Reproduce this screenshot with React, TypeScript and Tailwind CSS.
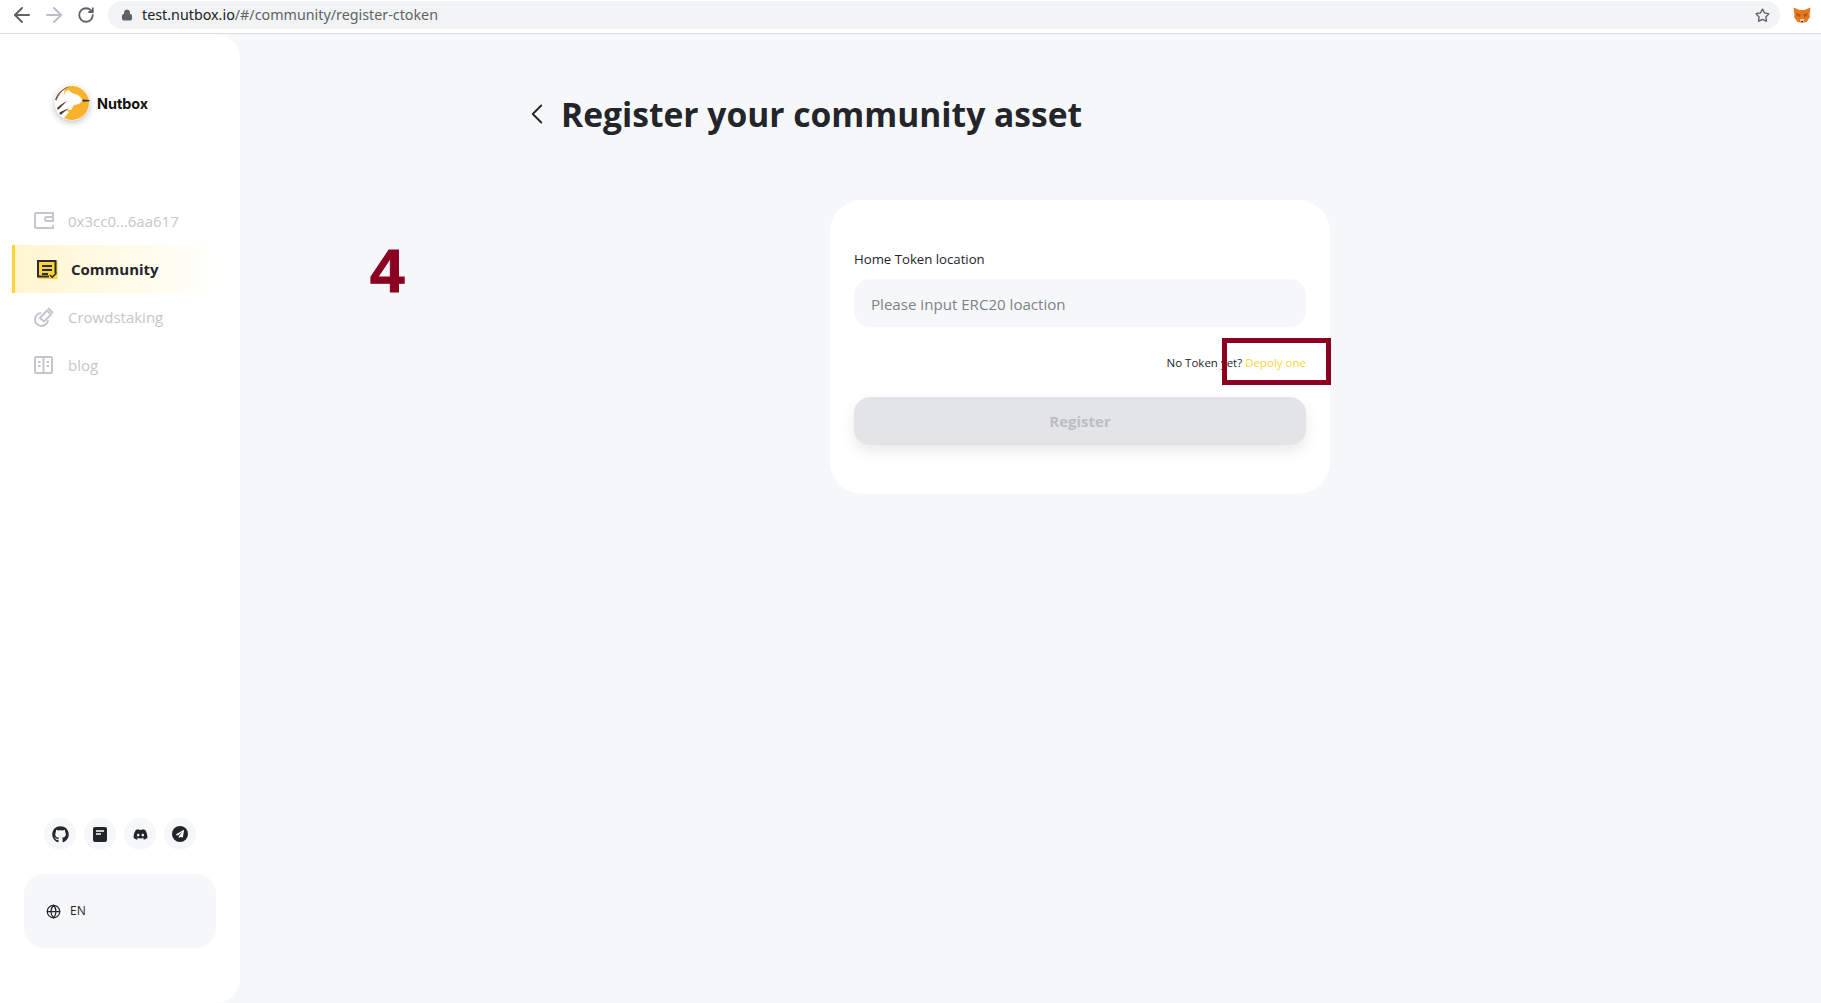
import React from 'react';
import { ArrowLeft, ArrowRight, RotateCw, Lock, Star, ChevronLeft, Globe } from 'lucide-react';
import { FaGithub, FaDiscord, FaPaperPlane } from 'react-icons/fa';

function Logo() {
    return (
        <svg width="36" height="36" viewBox="0 0 36 36" className="drop-shadow-[0_2px_3px_rgba(0,0,0,0.25)]">
            <circle cx="18" cy="18" r="17.5" fill="#ffffff" />
            <path d="M11 2.5 A17 17 0 0 1 35 18 A17 17 0 0 1 10 33 L15 27 L8 22 Z" fill="#f8b22c" />
            <path d="M12 6 L15 5 L18 8 L24 10 L29 15 L25 19 L20 20 L17 25 L9 25 L6 18 Z" fill="#ffffff" />
            <path d="M1 15 C3 8 9 2.5 17 1 C10 3.5 5 8.5 2.5 15.5 Z" fill="#7d5c45" />
            <path d="M3 23 C6 20 9 18 13 16 C10 19 7 22 4 25 Z" fill="#5a3a28" />
            <path d="M5 28 C8 26 11 24.5 15 23.5 C12 25.5 9 27.5 7 30 Z" fill="#5a3a28" />
            <path d="M28 14.5 L35.5 15 L35.5 16.2 L29 16.8 Z" fill="#4a2c1a" />
        </svg>
    );
}

function Fox() {
    return (
        <svg width="18" height="16" viewBox="0 0 18 16">
            <path d="M0.5 0.5 L6.5 3 L11.5 3 L17.5 0.5 L16.5 8 L17 10 L13.5 15 L10.5 15.5 L7.5 15.5 L4.5 15 L1 10 L1.5 8 Z" fill="#e8781e" />
            <path d="M3 6 L7.5 7 L7 10 L4 9 Z M15 6 L10.5 7 L11 10 L14 9 Z" fill="#b9591a" />
            <path d="M7 12 L11 12 L10.5 15.5 L7.5 15.5 Z" fill="#e6d6c8" />
            <path d="M8 14 L10 14 L9.5 15.5 L8.5 15.5 Z" fill="#2a2320" />
        </svg>
    );
}

function WalletIcon() {
    return (
        <svg width="20" height="18" viewBox="0 0 20 18" fill="none" stroke="#c4c6cb" strokeWidth="2">
            <path d="M19 5 V1 H2 A1 1 0 0 0 1 2 V15 A1 1 0 0 0 2 16 H19 V13" />
            <path d="M19 5 H13 A1.5 1.5 0 0 0 13 9 H19 V5" fill="#ffffff" />
        </svg>
    );
}

function CommunityIcon() {
    return (
        <svg width="21" height="19" viewBox="0 0 21 19">
            <rect x="1.5" y="1" width="19" height="18" fill="#fcd535" />
            <path d="M18.5 13 V1 H1 V16.5 H12" fill="none" stroke="#2b2c33" strokeWidth="2" />
            <path d="M5 6 H15 M5 10 H15 M5 14 H11" stroke="#2b2c33" strokeWidth="1.8" />
            <path d="M13 15 L15.2 17.2 L19.5 13" fill="none" stroke="#2b2c33" strokeWidth="1.6" />
        </svg>
    );
}

function StakingIcon() {
    return (
        <svg width="20" height="20" viewBox="0 0 20 20" fill="none" stroke="#c4c6cb" strokeWidth="2">
            <path d="M7 6 A6.5 6.5 0 1 0 14 13" />
            <path d="M6 11 L13 3.5 L17 7.5 L10 14.5 Z" />
            <path d="M14 1 L19 6" />
        </svg>
    );
}

function BlogIcon() {
    return (
        <svg width="19" height="18" viewBox="0 0 19 18" fill="none" stroke="#c4c6cb" strokeWidth="2">
            <rect x="1" y="1" width="17" height="16" rx="1" />
            <path d="M9.5 1 V17" />
            <path d="M4 6 H6.5 M4 10 H6.5 M12.5 6 H15 M12.5 10 H15" />
        </svg>
    );
}

function DocIcon() {
    return (
        <svg width="14" height="15" viewBox="0 0 14 15">
            <rect width="14" height="15" rx="2" fill="#24252b" />
            <path d="M3 4 H11 M3 7 H8" stroke="#ffffff" strokeWidth="1.4" />
        </svg>
    );
}

const navItems = [
    { icon: WalletIcon, title: '0x3cc0...6aa617' },
    { icon: CommunityIcon, title: 'Community', active: true },
    { icon: StakingIcon, title: 'Crowdstaking' },
    { icon: BlogIcon, title: 'blog' },
];

export default function App() {
    return (
        <div className="h-[1003px] flex flex-col overflow-hidden bg-[#f6f7f9] font-['Open_Sans',sans-serif] text-[#24252b]">
            <header className="h-[34px] flex items-center bg-white border-b border-[#dadce0] pb-[3px]">
                <div className="flex items-center gap-[8px] pl-[10px] w-[108px]">
                    <ArrowLeft className="h-[24px] w-[24px] text-[#5f6368]" strokeWidth={2} />
                    <ArrowRight className="h-[24px] w-[24px] text-[#bcbfc3]" strokeWidth={2} />
                    <RotateCw className="h-[18px] w-[18px] ml-[3px] text-[#5f6368]" strokeWidth={2.4} />
                </div>
                <div className="w-[1672px] h-[28px] flex items-center rounded-full bg-[#f1f3f4] pl-[13px] pr-[10px]">
                    <Lock className="h-[12px] w-[12px] text-[#5f6368] fill-[#5f6368]" />
                    <span className="ml-[9px] text-[14.3px] leading-[20px] font-['Noto_Sans',sans-serif] text-[#5f6368]">
                        <span className="text-[#202124]">test.nutbox.io</span>/#/community/register-ctoken
                    </span>
                    <Star className="ml-auto h-[15px] w-[15px] text-[#5f6368]" strokeWidth={2.2} />
                </div>
                <div className="ml-[13px] flex">
                    <Fox />
                </div>
            </header>

            <div className="flex flex-1 min-h-0">
                <aside className="w-[240px] bg-white rounded-r-[24px] flex flex-col">
                    <div className="flex items-center pl-[54px] pt-[51px]">
                        <Logo />
                        <span className="ml-[7px] mt-[2px] text-[14.4px] font-bold font-['Inter',sans-serif] text-[#111111]">Nutbox</span>
                    </div>

                    <nav className="mt-[76px] pl-[12px] pr-[12px]">
                        {navItems.map((item, index) => {
                            const Icon = item.icon;
                            return item.active ? (
                                <div key={index} className="h-[48px] flex items-center border-l-[3px] border-[#fcd535] bg-gradient-to-r from-[#fff5cf] via-[#fffbe8] to-white pl-[22px]">
                                    <div className="w-[21px]"><Icon /></div>
                                    <span className="ml-[13px] text-[15px] font-bold">{item.title}</span>
                                </div>
                            ) : (
                                <div key={index} className="h-[48px] flex items-center pl-[22px]">
                                    <div className="w-[20px]"><Icon /></div>
                                    <span className="ml-[14px] text-[15px] text-[#c4c6cb]">{item.title}</span>
                                </div>
                            );
                        })}
                    </nav>

                    <div className="mt-auto pb-[55px] px-[24px]">
                        <div className="flex justify-center gap-[8px]">
                            <div className="w-[32px] h-[32px] rounded-full bg-[#f6f7f9] flex items-center justify-center">
                                <FaGithub className="h-[17px] w-[17px]" />
                            </div>
                            <div className="w-[32px] h-[32px] rounded-full bg-[#f6f7f9] flex items-center justify-center">
                                <DocIcon />
                            </div>
                            <div className="w-[32px] h-[32px] rounded-full bg-[#f6f7f9] flex items-center justify-center">
                                <FaDiscord className="h-[15px] w-[15px]" />
                            </div>
                            <div className="w-[32px] h-[32px] rounded-full bg-[#f6f7f9] flex items-center justify-center">
                                <div className="w-[16px] h-[16px] rounded-full bg-[#24252b] flex items-center justify-center">
                                    <FaPaperPlane className="h-[8px] w-[8px] text-white" />
                                </div>
                            </div>
                        </div>
                        <div className="mt-[24px] h-[74px] rounded-[20px] bg-[#f6f7f9] flex items-center pl-[22px]">
                            <Globe className="h-[15px] w-[15px]" strokeWidth={2} />
                            <span className="ml-[9px] text-[12px]">EN</span>
                        </div>
                    </div>
                </aside>

                <main className="flex-1 relative">
                    <div className="flex items-center pl-[280px] pt-[54px]">
                        <ChevronLeft className="h-[34px] w-[34px]" strokeWidth={1.3} />
                        <h1 className="ml-[7px] text-[33.6px] leading-[52px] font-bold">Register your community asset</h1>
                    </div>

                    <div className="ml-[590px] mt-[60px] w-[500px] h-[294px] rounded-[32px] bg-white p-[24px] pt-[49px]">
                        <label className="block text-[13.2px] leading-[20px]">Home Token location</label>
                        <div className="mt-[10px] h-[48px] rounded-[16px] bg-[#f6f7f9] flex items-center px-[17px] pt-[2px] text-[15.1px] text-[#7d8288]">
                            Please input ERC20 loaction
                        </div>
                        <p className="mt-[27px] text-right text-[11.5px] leading-[18px]">
                            No Token yet? <span className="text-[#fcd535]">Depoly one</span>
                        </p>
                        <button className="mt-[25px] w-full h-[48px] rounded-[16px] bg-[#e3e4e8] text-[15px] font-bold text-[#bcbdc1] shadow-[0_6px_14px_rgba(0,0,0,0.09)]">
                            Register
                        </button>
                    </div>

                    <span className="absolute left-[130px] top-[202px] text-[62px] leading-[70px] font-bold font-['Liberation_Sans',sans-serif] text-[#8b0020] [-webkit-text-stroke:1px_#8b0020]">4</span>
                    <div className="absolute left-[982px] top-[304px] w-[109px] h-[47px] border-[5px] border-[#8b0020]" />
                </main>
            </div>
        </div>
    );
}
